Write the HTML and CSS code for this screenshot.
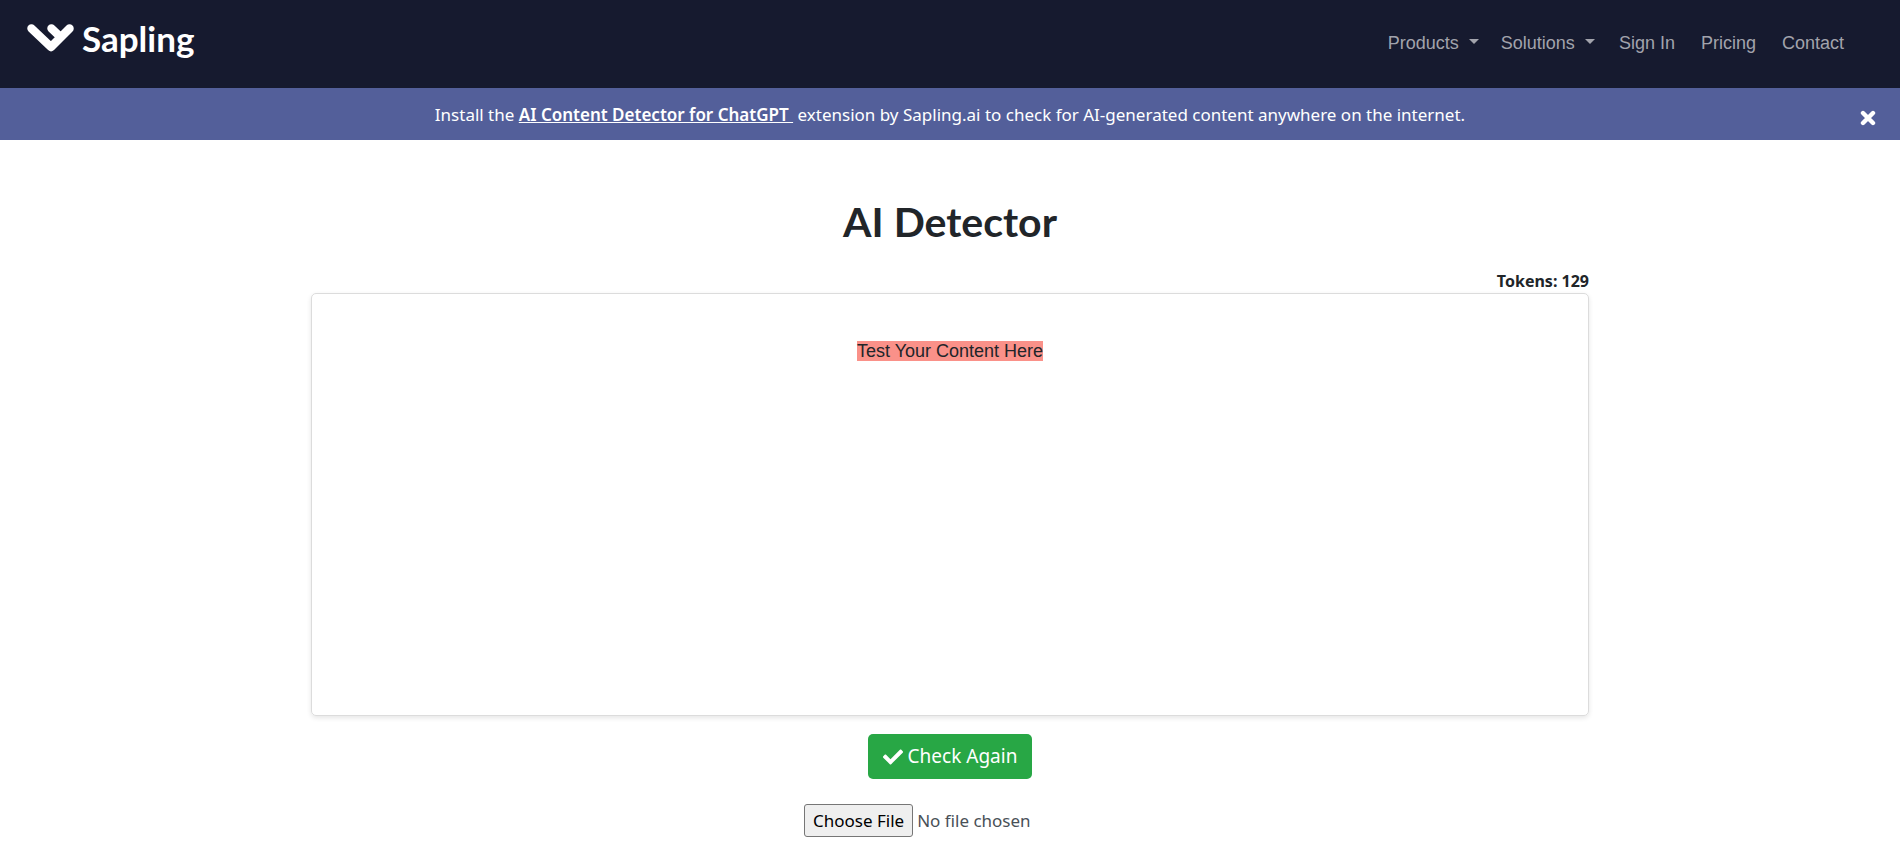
FILE: index.html
```
<!DOCTYPE html>
<html lang="en">
	<head>
		<meta charset="utf-8" />
		<meta name="viewport" content="width=device-width, initial-scale=1" />
		<title>AI Detector | Sapling</title>
		<link rel="stylesheet" href="styles.css">
	</head>
	<body>
		<!--navbar-->
		<header class="navbar">
			<a class="brand" href="#">
				<svg class="brand-icon" width="48" height="30" viewBox="0 0 48 30" aria-hidden="true">
					<path d="M4.500 5.500 L24 24 L42.500 5.500 M24.500 5.500 L33.500 14" fill="none" stroke="#fff" stroke-width="8.500" stroke-linecap="round" stroke-linejoin="round"/>
				</svg>
				<span>Sapling</span>
			</a>
			<nav>
				<ul class="nav-list">
					<li class="dropdown"><a href="#">Products</a></li>
					<li class="dropdown"><a href="#">Solutions</a></li>
					<li><a href="#">Sign In</a></li>
					<li><a href="#">Pricing</a></li>
					<li><a href="#">Contact</a></li>
				</ul>
			</nav>
		</header>
		<!--install banner-->
		<div class="banner">
			<p>Install the <a href="#">AI Content Detector for ChatGPT&nbsp;</a> extension by Sapling.ai to check for AI-generated content anywhere on the internet.</p>
			<button type="button" class="close" aria-label="Close">
				<svg width="16" height="16" viewBox="0 0 16 16" aria-hidden="true">
					<path d="M3 3 L13 13 M13 3 L3 13" fill="none" stroke="#fff" stroke-width="4.400" stroke-linecap="round"/>
				</svg>
			</button>
		</div>
		<!--detector-->
		<main class="container">
			<h1>AI Detector</h1>
			<div class="tokens">Tokens: 129</div>
			<div class="editor" contenteditable="true" role="textbox" aria-multiline="true" aria-label="Content" spellcheck="false"><p><mark>Test Your Content Here</mark></p></div>
			<button type="button" class="btn">
				<svg width="20" height="20" viewBox="0 0 512 512" aria-hidden="true">
					<path fill="#fff" d="M174 439 L7 273 c-10-10-10-26 0-36 l36-36 c10-10 26-10 36 0 L192 314 L433 73 c10-10 26-10 36 0 l36 36 c10 10 10 26 0 36 L210 439 c-10 10-26 10-36 0z"/>
				</svg>
				<span>Check Again</span>
			</button>
			<input type="file" class="file" aria-label="Upload a file">
		</main>
	</body>
</html>
```
FILE: styles.css
```
*{
	box-sizing: border-box;
}
body,ul,p,h1{
	margin: 0;
	padding: 0;
}
body{
	font-family: "Segoe UI", "Noto Sans", sans-serif;
	font-size: 17px;
	line-height: 24px;
	color: #212529;
	background: #fff;
}
li{
	list-style: none;
}
.navbar{
	display: flex;
	justify-content: space-between;
	align-items: flex-start;
	min-height: 88px;
	padding: 16px 43px 16px 27px;
	background: #161a2f;
}
.brand{
	display: flex;
	align-items: center;
	gap: 7px;
	font-family: Lato, sans-serif;
	font-size: 35px;
	font-weight: bold;
	line-height: 44px;
	color: #fff;
	text-decoration: none;
}
.nav-list{
	display: flex;
	font-family: "Liberation Sans", Arial, sans-serif;
	font-size: 18px;
	line-height: 24px;
	padding-top: 15px;
}
.nav-list li{
	padding: 0 13px;
}
.nav-list .dropdown{
	padding: 0 11px;
}
.nav-list a{
	color: #a2a3ac;
	text-decoration: none;
}
.dropdown a:after{
	content: "";
	display: inline-block;
	margin-left: 10px;
	vertical-align: 5px;
	border-top: 5px solid;
	border-left: 5px solid transparent;
	border-right: 5px solid transparent;
}
.banner{
	position: relative;
	padding: 15px 60px 13px;
	background: #535f9a;
	color: #fff;
	text-align: center;
}
.banner a{
	color: #fff;
	font-weight: 600;
}
.close{
	position: absolute;
	top: 22px;
	right: 24px;
	padding: 0;
	border: 0;
	background: none;
	line-height: 0;
	cursor: pointer;
}
.container{
	display: flex;
	flex-direction: column;
	align-items: center;
	max-width: 1310px;
	margin: 0 auto;
	padding: 54px 16px 16px;
}
h1{
	font-family: Lato, sans-serif;
	font-size: 41px;
	font-weight: bold;
	line-height: 56px;
}
.tokens{
	align-self: flex-end;
	margin-top: 19px;
	font-size: 16px;
	font-weight: bold;
}
.editor{
	width: 100%;
	min-height: 423px;
	padding: 45px 24px;
	border: 1px solid #dcdcdc;
	border-radius: 5px;
	box-shadow: 0 2px 5px rgba(0,0,0,.1);
	font-family: "Liberation Sans", Arial, sans-serif;
	font-size: 18px;
	text-align: center;
}
mark{
	background: #fa9189;
	color: #212529;
}
.btn{
	display: flex;
	align-items: center;
	gap: 5px;
	margin-top: 18px;
	padding: 8px 15px;
	border: 0;
	border-radius: 5px;
	background: #28a745;
	color: #fff;
	font-family: inherit;
	font-size: 19px;
	line-height: 29px;
	cursor: pointer;
}
.file{
	width: 292px;
	margin-top: 25px;
	font-family: inherit;
	font-size: 17px;
	color: #495057;
}
.file::file-selector-button{
	height: 33px;
	padding: 0 8px;
	border: 1px solid #767676;
	border-radius: 3px;
	background: #efefef;
	color: #000;
	font: inherit;
}
```
